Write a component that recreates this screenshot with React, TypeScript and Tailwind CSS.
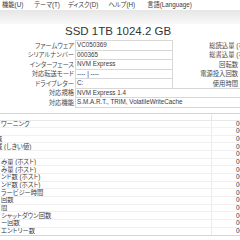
const sans = "font-['Liberation_Sans','Noto_Sans_CJK_JP',sans-serif] [font-feature-settings:'palt']";

const infoRows: { label: string; value: string; right?: string; wide?: boolean }[] = [
  { label: "ファームウェア", value: "VC050369", right: "総読込量 (ホスト)" },
  { label: "シリアルナンバー", value: "000365", right: "総書込量 (ホスト)" },
  { label: "インターフェース", value: "NVM Express", right: "回転数" },
  { label: "対応転送モード", value: "---- | ----", right: "電源投入回数" },
  { label: "ドライブレター", value: "C:", right: "使用時間" },
  { label: "対応規格", value: "NVM Express 1.4", wide: true },
  { label: "対応機能", value: "S.M.A.R.T., TRIM, VolatileWriteCache", wide: true },
];

const listRows: { text: string; shift?: boolean }[] = [
  { text: "ワーニング" },
  { text: "" },
  { text: "域", shift: true },
  { text: "域 (しきい値)", shift: true },
  { text: "" },
  { text: "み量 (ホスト)" },
  { text: "み量 (ホスト)" },
  { text: "ンド数 (ホスト)" },
  { text: "ンド数 (ホスト)" },
  { text: "ラービジー時間" },
  { text: "回数" },
  { text: "間" },
  { text: "シャットダウン回数" },
  { text: "ー回数" },
  { text: "エントリー数" },
];

export default function App() {
  return (
    <div className={`w-[240px] h-[240px] overflow-hidden bg-white text-[#333] ${sans}`}>
      {/* menu bar */}
      <div className="h-[10px] flex items-center text-[6.3px] leading-none text-[#3a3a3a] whitespace-nowrap">
        <span className="ml-[2px]">機能(U)</span>
        <span className="ml-[11px]">テーマ(T)</span>
        <span className="ml-[8px]">ディスク(D)</span>
        <span className="ml-[10px]">ヘルプ(H)</span>
        <span className="ml-[12px]">言語(Language)</span>
      </div>
      {/* toolbar band */}
      <div className="h-[14px] bg-gradient-to-b from-[#e6e6e6] to-[#f9f9f9]" />
      {/* title */}
      <div className="h-[16px] flex items-center pl-[65px] text-[11.5px] leading-none text-[#333] whitespace-nowrap">
        SSD 1TB 1024.2 GB
      </div>
      {/* info rows */}
      <div className="flex flex-col mt-[1px]">
        {infoRows.map((r, i) => (
          <div key={i} className="h-[9.5px] flex items-stretch whitespace-nowrap">
            <div className="w-[75px] shrink-0 flex items-center justify-end pr-[1px] text-[6.3px] leading-none text-[#4a4a4a]">
              {r.label}
            </div>
            <div
              className={`${r.wide ? "w-[170px]" : "w-[98px]"} shrink-0 border border-[#d8d8d8] -mt-px first:mt-0 flex items-center pl-[1px] text-[6.3px] leading-none text-[#3a3a3a]`}
            >
              {r.value}
            </div>
            {r.right !== undefined && (
              <div className="flex-1 flex items-center justify-end pr-[2px] text-[6.3px] leading-none text-[#4a4a4a] overflow-visible">
                {r.right.length > 6 ? <span className="-mr-[19px]">{r.right}</span> : r.right}
              </div>
            )}
          </div>
        ))}
      </div>
      {/* list */}
      <div className="mt-[5px] border-t border-b border-[#d6d6d6]">
        <div className="h-[7px] flex border-b border-[#e8e8e8]">
          <div className="w-[212px] border-r border-[#e6e6e6]" />
          <div className="flex-1" />
        </div>
        {listRows.map((r, i) => (
          <div key={i} className="h-[7.67px] flex border-b border-[#f0f0f0] last:border-b-0 text-[6.3px] leading-none whitespace-nowrap">
            <div className="w-[212px] shrink-0 border-r border-[#ebebeb] flex items-center overflow-hidden text-[#3a3a3a]">
              <span className={r.shift ? "-ml-[4px]" : "ml-[1px]"}>{r.text}</span>
            </div>
            <div className="flex-1 flex items-center pl-[24px] overflow-hidden text-[#3a3a3a]">000000000000</div>
          </div>
        ))}
      </div>
    </div>
  );
}
